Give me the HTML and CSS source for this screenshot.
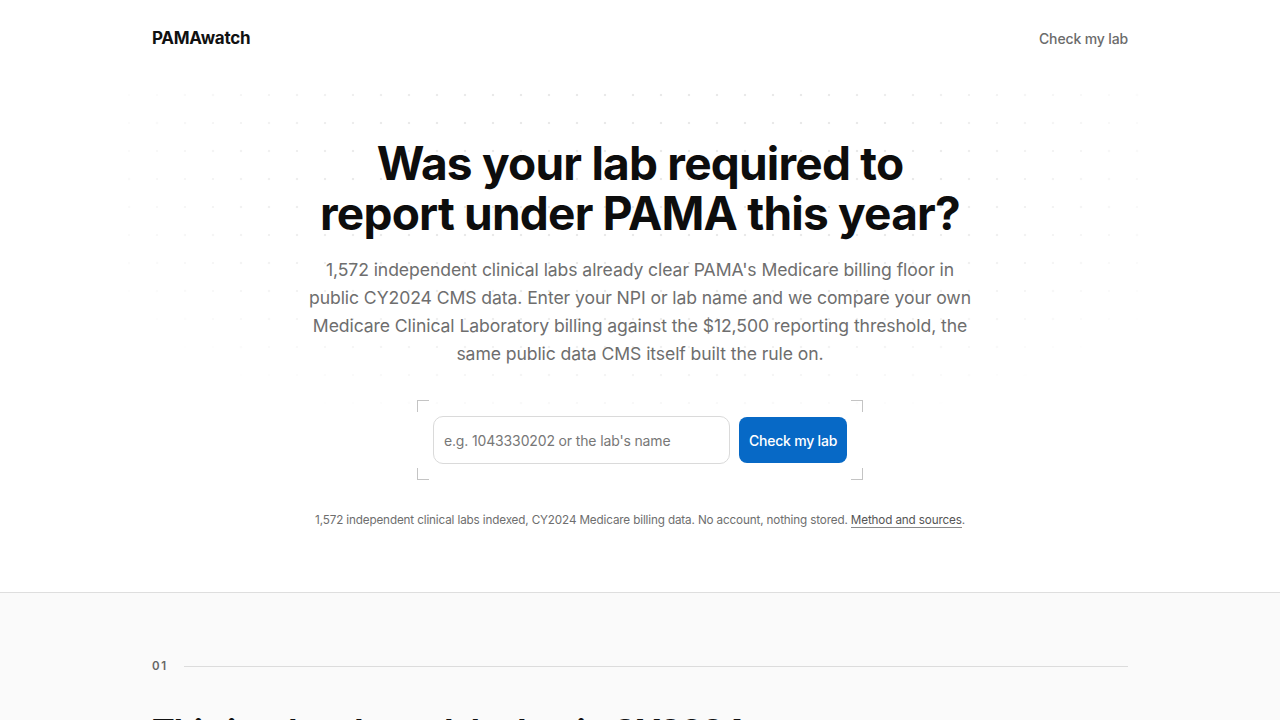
FILE: index.html
```html
<!DOCTYPE html>
<html lang="en">
<head>
<meta charset="utf-8">
<title>PAMAwatch</title>
<link rel="stylesheet" href="styles.css">
</head>
<body>
<header class="site-header">
  <div class="wrap header-inner">
    <a class="logo" href="#">PAMAwatch</a>
    <a class="nav-link" href="#">Check my lab</a>
  </div>
</header>

<main>
  <section class="hero">
    <div class="hero-inner">
      <h1 class="hero-title">Was your lab required to<br>report under PAMA this year?</h1>
      <p class="hero-lede">1,572 independent clinical labs already clear PAMA's Medicare billing floor in public CY2024 CMS data. Enter your NPI or lab name and we compare your own Medicare Clinical Laboratory billing against the $12,500 reporting threshold, the same public data CMS itself built the rule on.</p>
      <div class="search-frame">
        <span class="corner tl"></span><span class="corner tr"></span><span class="corner bl"></span><span class="corner br"></span>
        <form class="search-form">
          <input class="search-input" type="text" placeholder="e.g. 1043330202 or the lab's name">
          <button class="search-btn" type="button">Check my lab</button>
        </form>
      </div>
      <p class="hero-note">1,572 independent clinical labs indexed, CY2024 Medicare billing data. No account, nothing stored. <a href="#">Method and sources</a>.</p>
    </div>
  </section>

  <section class="section-alt">
    <div class="wrap">
      <div class="section-label"><span class="section-num">01</span><span class="section-rule"></span></div>
      <h2 class="section-title">This is who cleared the bar in CY2024</h2>
    </div>
  </section>
</main>
</body>
</html>
```

FILE: styles.css
```css
* { box-sizing: border-box; }
html, body { margin: 0; padding: 0; }
body {
  font-family: Inter, "Noto Sans", "Liberation Sans", sans-serif;
  color: #111;
  background: #fff;
  -webkit-font-smoothing: antialiased;
}
a { color: inherit; text-decoration: none; }

.wrap {
  max-width: 1024px;
  margin: 0 auto;
  padding: 0 24px;
}

.site-header { height: 76px; }
.header-inner {
  height: 76px;
  display: flex;
  align-items: center;
  justify-content: space-between;
}
.logo {
  font-size: 17px;
  font-weight: 700;
  letter-spacing: -0.015em;
  color: #111;
}
.nav-link {
  font-size: 14px;
  color: #6b6b6b;
  font-weight: 500;
  letter-spacing: -0.01em;
}

.hero {
  position: relative;
  padding: 62px 24px 64px;
  border-bottom: 1px solid #dedede;
}
.hero::before {
  content: "";
  position: absolute;
  top: 4px;
  bottom: 80px;
  left: 50%;
  width: 1024px;
  margin-left: -512px;
  background-image: radial-gradient(circle, #e9e9e9 1.1px, transparent 1.6px);
  background-size: 28px 28px;
  background-position: -13px 1px;
  -webkit-mask-image: radial-gradient(ellipse 58% 60% at 50% 25%, #000 45%, transparent 100%);
  mask-image: radial-gradient(ellipse 58% 60% at 50% 25%, #000 45%, transparent 100%);
  pointer-events: none;
}
.hero-inner {
  position: relative;
  max-width: 700px;
  margin: 0 auto;
  display: flex;
  flex-direction: column;
  align-items: center;
  text-align: center;
}
.hero-title {
  margin: 0;
  font-size: 46px;
  line-height: 50px;
  font-weight: 700;
  letter-spacing: -0.017em;
  color: #0d0d0d;
}
.hero-lede {
  margin: 18px 0 0;
  max-width: 664px;
  font-size: 17.6px;
  line-height: 28px;
  color: #6e6e6e;
  letter-spacing: -0.005em;
}

.search-frame {
  position: relative;
  margin-top: 32px;
  padding: 16px;
}
.corner {
  position: absolute;
  width: 12px;
  height: 12px;
  border-color: #c4c4c4;
  border-style: solid;
  border-width: 0;
}
.corner.tl { top: 0; left: 0; border-top-width: 1px; border-left-width: 1px; }
.corner.tr { top: 0; right: 0; border-top-width: 1px; border-right-width: 1px; }
.corner.bl { bottom: 0; left: 0; border-bottom-width: 1px; border-left-width: 1px; }
.corner.br { bottom: 0; right: 0; border-bottom-width: 1px; border-right-width: 1px; }

.search-form {
  display: flex;
  align-items: center;
  gap: 9px;
}
.search-input {
  width: 297px;
  height: 48px;
  border: 1px solid #dadada;
  border-radius: 10px;
  background: #fff;
  padding: 0 10px;
  font-family: inherit;
  font-size: 14px;
  color: #111;
  letter-spacing: -0.01em;
}
.search-input::placeholder { color: #777; }
.search-btn {
  height: 46px;
  padding: 0 10px;
  border: 0;
  border-radius: 8px;
  background: #0769c6;
  color: #fff;
  font-family: inherit;
  font-size: 14px;
  font-weight: 500;
  letter-spacing: -0.015em;
}

.hero-note {
  margin: 32px 0 0;
  font-size: 11.7px;
  line-height: 16px;
  color: #6e6e6e;
  letter-spacing: -0.012em;
  white-space: nowrap;
}
.hero-note a {
  color: #555;
  border-bottom: 1px solid #8a8a8a;
}

.section-alt {
  background: #fafafa;
  padding-top: 66px;
  height: 200px;
}
.section-label {
  display: flex;
  align-items: center;
  gap: 16px;
}
.section-num {
  font-size: 11.5px;
  font-weight: 600;
  color: #666;
  letter-spacing: 0.14em;
}
.section-rule {
  flex: 1;
  height: 1px;
  background: #dcdcdc;
}
.section-title {
  margin: 39px 0 0;
  font-size: 34px;
  line-height: 40px;
  font-weight: 700;
  letter-spacing: -0.03em;
  color: #111;
}
```
